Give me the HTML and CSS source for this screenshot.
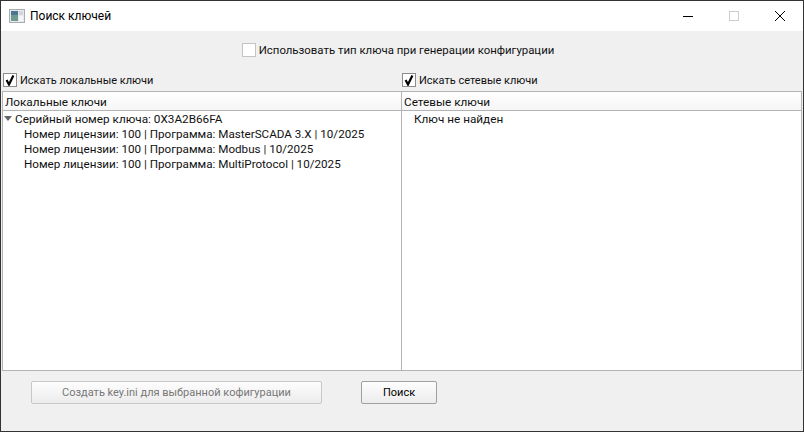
FILE: index.html
```html
<!DOCTYPE html>
<html lang="ru">
<head>
<meta charset="utf-8">
<title>Поиск ключей</title>
<link rel="stylesheet" href="styles.css">
</head>
<body>
<div class="window">
  <header class="titlebar">
    <svg class="app-icon" width="16" height="16" viewBox="0 0 16 16">
      <rect x="0.5" y="1.5" width="15" height="13" fill="#e8eaec" stroke="#a8acb0"/>
      <rect x="2" y="3" width="7" height="10" fill="#6f9a90"/>
      <rect x="2" y="3" width="7" height="4" fill="#4a7690"/>
      <rect x="10" y="3" width="4" height="4" fill="#cfd6de"/>
      <rect x="10" y="8" width="4" height="5" fill="#f4f5f6"/>
    </svg>
    <span class="title">Поиск ключей</span>
    <div class="winbtns">
      <svg class="winbtn" width="46" height="30" viewBox="0 0 46 30"><path d="M18 15.5H28" stroke="#000"/></svg>
      <svg class="winbtn" width="46" height="30" viewBox="0 0 46 30"><rect x="18.5" y="10.5" width="9" height="9" fill="none" stroke="#ccc"/></svg>
      <svg class="winbtn" width="46" height="30" viewBox="0 0 46 30"><path d="M18 10L28 20M28 10L18 20" stroke="#000"/></svg>
    </div>
  </header>
  <main class="content">
    <div class="top-option">
      <label class="check check-wide"><span class="box"></span>Использовать тип ключа при генерации конфигурации</label>
    </div>
    <div class="columns options">
      <label class="check"><span class="box box-on"><svg width="12" height="12" viewBox="0 0 12 12"><path d="M2.6 6L5 10.5L9.4 1.5" fill="none" stroke="#000" stroke-width="2.2"/></svg></span>Искать локальные ключи</label>
      <label class="check"><span class="box box-on"><svg width="12" height="12" viewBox="0 0 12 12"><path d="M2.6 6L5 10.5L9.4 1.5" fill="none" stroke="#000" stroke-width="2.2"/></svg></span>Искать сетевые ключи</label>
    </div>
    <div class="table">
      <section class="pane">
        <div class="pane-head">Локальные ключи</div>
        <div class="tree">
          <div class="row"><span class="arrow"></span>Серийный номер ключа: 0X3A2B66FA</div>
          <div class="row child">Номер лицензии: 100 | Программа: MasterSCADA 3.X | 10/2025</div>
          <div class="row child">Номер лицензии: 100 | Программа: Modbus | 10/2025</div>
          <div class="row child">Номер лицензии: 100 | Программа: MultiProtocol | 10/2025</div>
        </div>
      </section>
      <section class="pane">
        <div class="pane-head">Сетевые ключи</div>
        <div class="tree">
          <div class="row empty">Ключ не найден</div>
        </div>
      </section>
    </div>
    <div class="actions">
      <button class="btn btn-wide" disabled>Создать key.ini для выбранной кофигурации</button>
      <button class="btn btn-search">Поиск</button>
    </div>
  </main>
</div>
</body>
</html>
```
FILE: styles.css
```css
* { box-sizing: border-box; }
html, body { margin: 0; padding: 0; }
body {
  width: 804px;
  height: 432px;
  overflow: hidden;
  font-family: Roboto, "Open Sans", sans-serif;
  font-size: 11.75px;
  color: #111;
}
.window {
  width: 804px;
  height: 432px;
  border: 1px solid #333;
  display: flex;
  flex-direction: column;
  background: #f0f0f0;
}
.titlebar {
  height: 30px;
  background: #fff;
  display: flex;
  align-items: center;
  padding-left: 8px;
  flex: none;
}
.app-icon { margin-right: 5px; }
.title { font-size: 12px; color: #000; }
.winbtns { margin-left: auto; display: flex; }
.winbtn { display: block; }
.content {
  flex: 1;
  display: flex;
  flex-direction: column;
  padding: 0 1px;
}
.top-option {
  display: flex;
  justify-content: center;
  height: 42px;
  padding-top: 12px;
  padding-right: 8px;
}
.check {
  display: flex;
  align-items: center;
  height: 14px;
  white-space: nowrap;
  font-size: 11px;
}
.check-wide { font-size: 11.4px; }
.box {
  width: 14px;
  height: 14px;
  background: #fff;
  border: 1px solid #c4c4c4;
  margin-right: 3px;
  flex: none;
  display: flex;
  align-items: center;
  justify-content: center;
}
.box-on { border-color: #8c8c8c; }
.columns {
  display: grid;
  grid-template-columns: 399px 1fr;
}
.options {
  height: 18px;
  padding-left: 1px;
}
.table {
  display: grid;
  grid-template-columns: 398px 1fr;
  height: 280px;
  border: 1px solid #b4b4b4;
  background: #fff;
}
.pane + .pane { border-left: 1px solid #b4b4b4; }
.pane-head {
  height: 19px;
  line-height: 20px;
  padding-left: 2px;
  background: linear-gradient(#fff, #f6f6f6);
  border-bottom: 1px solid #b4b4b4;
}
.tree { padding-top: 1px; }
.row {
  height: 15px;
  line-height: 15px;
  white-space: nowrap;
  padding-left: 12px;
  position: relative;
}
.child { padding-left: 21px; font-size: 11.65px; }
.empty { padding-left: 12px; }
.arrow {
  position: absolute;
  left: 1px;
  top: 4px;
  border-left: 4px solid transparent;
  border-right: 4px solid transparent;
  border-top: 5px solid #666;
}
.actions {
  display: flex;
  align-items: center;
  padding: 10px 0 0 29px;
  gap: 39px;
}
.btn {
  height: 23px;
  font: inherit;
  font-size: 11px;
  padding: 0;
  border: 1px solid #a0a0a0;
  border-radius: 2px;
  background: linear-gradient(#fdfdfd, #ececec);
  color: #000;
}
.btn-wide {
  width: 291px;
  border-color: #c8c8c8;
  color: #777;
}
.btn-search { width: 76px; }
```
